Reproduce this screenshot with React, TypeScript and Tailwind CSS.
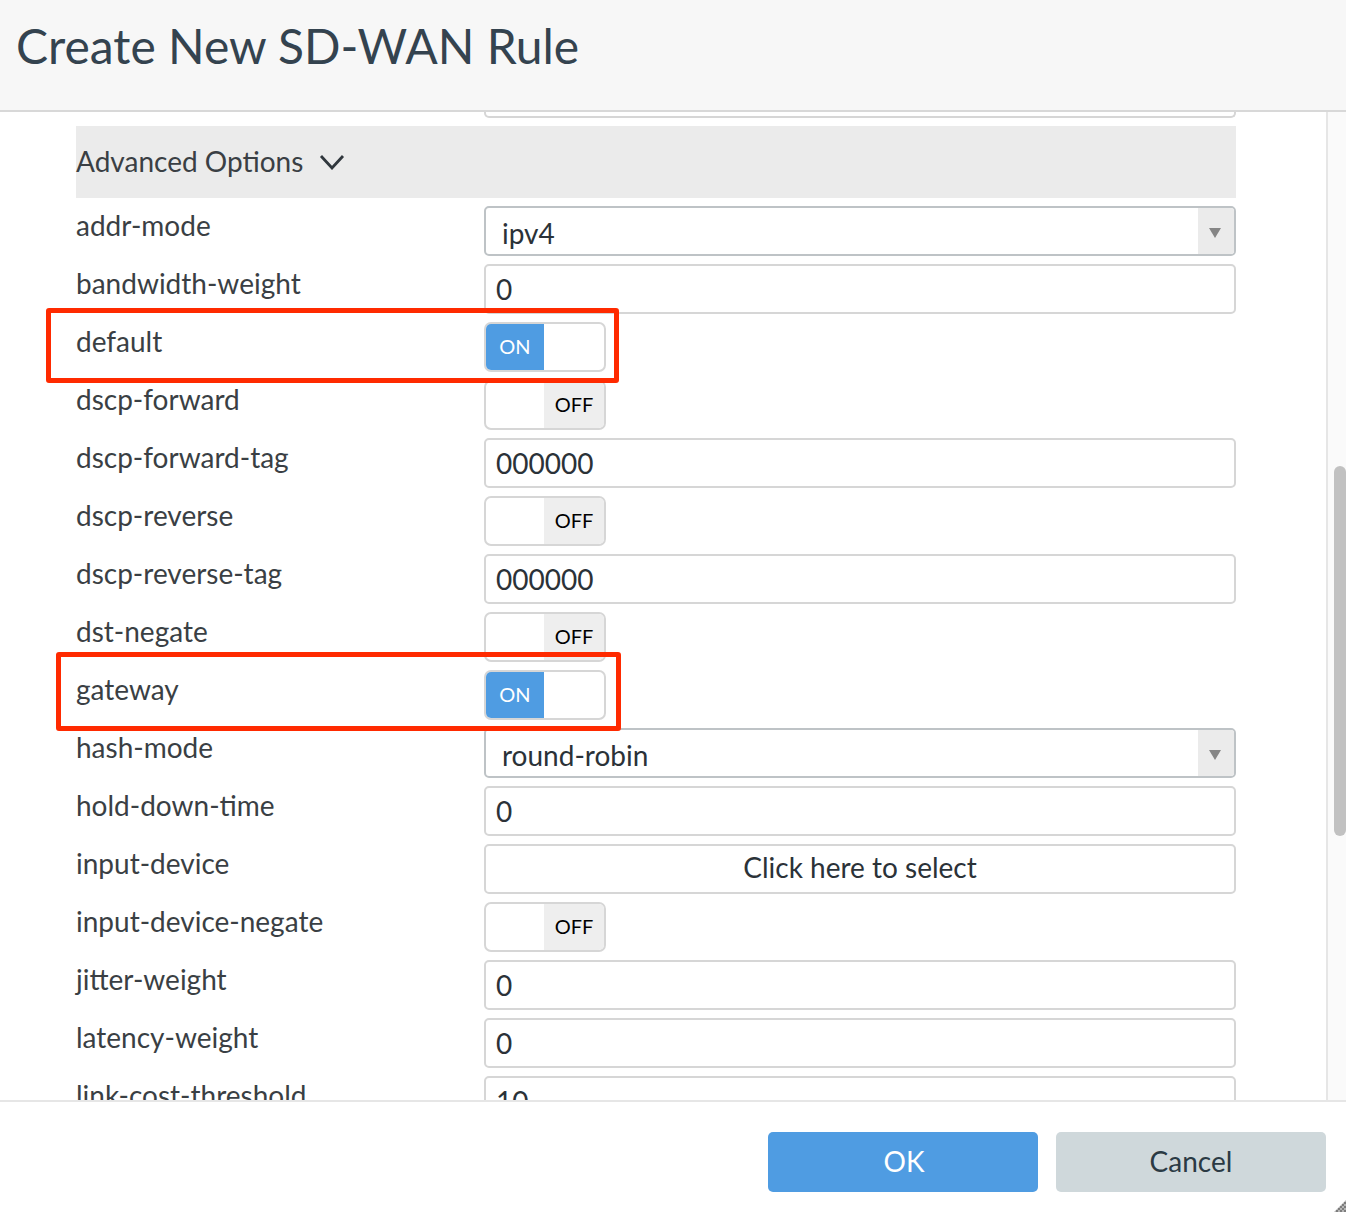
import React from "react";

type Row =
  | { label: string; kind: "input"; value: string }
  | { label: string; kind: "select"; value: string }
  | { label: string; kind: "on" }
  | { label: string; kind: "off" }
  | { label: string; kind: "pick"; value: string };

const rows: Row[] = [
  { label: "addr-mode", kind: "select", value: "ipv4" },
  { label: "bandwidth-weight", kind: "input", value: "0" },
  { label: "default", kind: "on" },
  { label: "dscp-forward", kind: "off" },
  { label: "dscp-forward-tag", kind: "input", value: "000000" },
  { label: "dscp-reverse", kind: "off" },
  { label: "dscp-reverse-tag", kind: "input", value: "000000" },
  { label: "dst-negate", kind: "off" },
  { label: "gateway", kind: "on" },
  { label: "hash-mode", kind: "select", value: "round-robin" },
  { label: "hold-down-time", kind: "input", value: "0" },
  { label: "input-device", kind: "pick", value: "Click here to select" },
  { label: "input-device-negate", kind: "off" },
  { label: "jitter-weight", kind: "input", value: "0" },
  { label: "latency-weight", kind: "input", value: "0" },
  { label: "link-cost-threshold", kind: "input", value: "10" },
];

function Control({ row }: { row: Row }) {
  if (row.kind === "input") {
    return (
      <div className="h-[50px] w-[752px] rounded-[5px] border-2 border-[#d6d6d6] bg-white pl-[10px] pt-[3px] text-[28px] leading-[40px] text-[#2b3238]">
        {row.value}
      </div>
    );
  }
  if (row.kind === "select") {
    return (
      <div className="flex h-[50px] w-[752px] overflow-hidden rounded-[5px] border-2 border-[#bec3c6] bg-white">
        <div className="flex-1 pl-4 pt-[5px] text-[28px] leading-[40px] text-[#2b3238]">{row.value}</div>
        <div className="flex w-9 items-center justify-center bg-[#ebebeb] pt-1 pr-[2px]">
          <svg width="12" height="10" viewBox="0 0 12 10">
            <path d="M0 0H12L6 10Z" fill="#858585" />
          </svg>
        </div>
      </div>
    );
  }
  if (row.kind === "pick") {
    return (
      <div className="h-[50px] w-[752px] rounded-[5px] border-2 border-[#d6d6d6] bg-white pt-[1px] text-center text-[28px] leading-[40px] text-[#2b3238]">
        {row.value}
      </div>
    );
  }
  if (row.kind === "on") {
    return (
      <div className="flex h-[50px] w-[122px] overflow-hidden rounded-[7px] border-2 border-[#d6d6d6] bg-white">
        <div className="flex w-[58px] items-center justify-center bg-[#4f9ce2] pb-[2px] text-[20px] text-white">ON</div>
      </div>
    );
  }
  return (
    <div className="flex h-[50px] w-[122px] justify-end overflow-hidden rounded-[7px] border-2 border-[#d6d6d6] bg-white">
      <div className="flex w-[60px] items-center justify-center bg-[#eeeeee] pb-[2px] text-[20px] text-black">OFF</div>
    </div>
  );
}

export default function App() {
  return (
    <div className="relative flex h-[1212px] w-[1346px] flex-col overflow-hidden bg-white font-['Lato','Liberation_Sans',sans-serif] [font-variant-ligatures:common-ligatures]">
      <header className="h-[112px] shrink-0 border-b-2 border-[#d8d8d8] bg-[#f7f7f7] pl-4 pt-[14px] text-[48px] leading-[64px] text-[#34434f]">
        Create New SD-WAN Rule
      </header>
      <div className="flex min-h-0 flex-1">
        <main className="relative min-w-0 flex-1 overflow-hidden pl-[76px]">
          <div className="ml-[408px] h-[6px] w-[752px] rounded-b-[5px] border-x-2 border-b-2 border-[#d6d6d6]" />
          <div className="mt-2 flex h-[72px] w-[1160px] items-center gap-4 bg-[#ebebeb] pb-[2px] text-[28px] text-[#3a3f44]">
            <span>Advanced Options</span>
            <svg className="mt-[2px]" width="26" height="16" viewBox="0 0 26 16" fill="none" stroke="#30373d" strokeWidth="2.8">
              <path d="M2 2L13 14L24 2" />
            </svg>
          </div>
          <div className="mt-2 flex flex-col gap-2">
            {rows.map((row) => (
              <div key={row.label} className="flex h-[50px] w-[1160px]">
                <div className="w-[408px] shrink-0 text-[28px] leading-[38px] text-[#3a3f44]">{row.label}</div>
                <Control row={row} />
              </div>
            ))}
          </div>
        </main>
        <aside className="relative w-5 shrink-0 border-l-2 border-[#e6e6e6] bg-[#fafafa]">
          <div className="absolute right-0 top-[354px] h-[370px] w-3 rounded-md bg-[#c1c1c1]" />
        </aside>
      </div>
      <footer className="flex h-[112px] shrink-0 justify-end gap-[18px] border-t-2 border-[#e6e6e6] bg-white pr-5 pt-[30px]">
        <button className="h-[60px] w-[270px] rounded-[5px] bg-[#4f9ce2] pb-[2px] pl-[2px] text-[28px] text-white">OK</button>
        <button className="h-[60px] w-[270px] rounded-[5px] bg-[#cfd8db] pb-[2px] text-[28px] text-[#2b3a44]">Cancel</button>
      </footer>
      <svg className="absolute bottom-0 right-0" width="12" height="12" viewBox="0 0 12 12">
        <defs>
          <pattern id="grip" width="4" height="4" patternUnits="userSpaceOnUse">
            <rect width="4" height="4" fill="#b5b5b5" />
            <rect width="2" height="2" fill="#7d7d7d" />
            <rect x="2" y="2" width="2" height="2" fill="#7d7d7d" />
          </pattern>
        </defs>
        <path d="M12 0V12H0Z" fill="url(#grip)" />
      </svg>
      <div className="absolute left-[46px] top-[308px] h-[75px] w-[573px] rounded-[3px] border-[5px] border-[#ff2a00]" />
      <div className="absolute left-[56px] top-[652px] h-[79px] w-[565px] rounded-[3px] border-[5px] border-[#ff2a00]" />
    </div>
  );
}
